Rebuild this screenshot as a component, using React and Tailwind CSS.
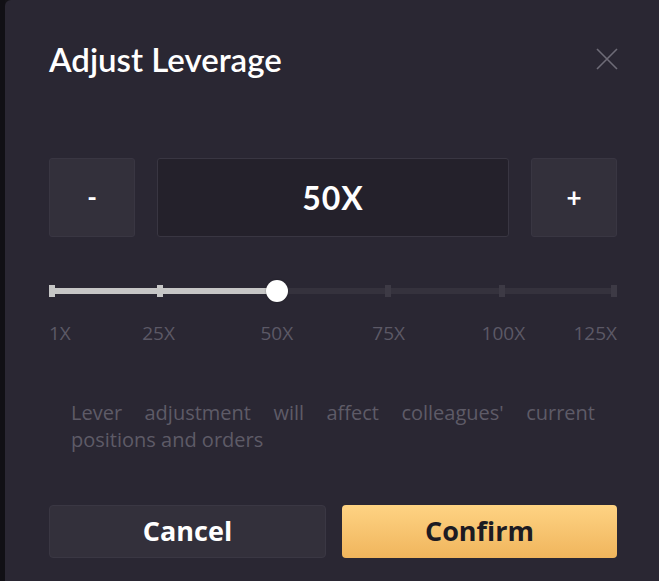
import React, { useState } from "react";

const marks = [
  { label: "1X", pos: 0 },
  { label: "25X", pos: 19.3 },
  { label: "50X", pos: 40.1 },
  { label: "75X", pos: 59.8 },
  { label: "100X", pos: 80 },
  { label: "125X", pos: 100 },
];

const LeverageSlider = ({ index }) => {
  const pct = marks[index].pos;
  return (
    <div className="mt-[42px]">
      <div className="relative h-6">
        <div className="absolute left-0 right-0 top-1/2 h-[6px] -translate-y-1/2 bg-[#35323d]" />
        <div
          className="absolute left-0 top-1/2 h-[6px] -translate-y-1/2 bg-[#c6c6c6]"
          style={{ width: `${pct}%` }}
        />
        {marks.map((m, i) => (
          <div
            key={m.label}
            className={`absolute top-1/2 h-3 w-[6px] -translate-y-1/2 ${i <= index ? "bg-[#c6c6c6]" : "bg-[#3d3a45]"}`}
            style={{ left: `calc(${m.pos}% - ${(m.pos / 100) * 6}px)` }}
          />
        ))}
        <div
          className="absolute top-1/2 h-[22px] w-[22px] -translate-x-1/2 -translate-y-1/2 rounded-full bg-white shadow-[0_0_2px_rgba(0,0,0,0.4)]"
          style={{ left: `${pct}%` }}
        />
      </div>
      <div className="relative mt-[18px] h-6 text-[19px] leading-6 text-[#5c5966]" style={{ fontFamily: "'Open Sans', sans-serif" }}>
        {marks.map((m, i) => {
          let cls = "absolute top-0 -translate-x-1/2";
          if (i === 0) cls = "absolute top-0 left-0";
          if (i === marks.length - 1) cls = "absolute top-0 right-0";
          return (
            <span key={m.label} className={cls} style={i === 0 || i === marks.length - 1 ? {} : { left: `${m.pos}%` }}>
              {m.label}
            </span>
          );
        })}
      </div>
    </div>
  );
};

export default function App() {
  const [index] = useState(2);

  return (
    <div className="flex h-[581px] w-[659px] overflow-hidden bg-[#141318]" style={{ fontFamily: "Lato, 'Noto Sans', sans-serif" }}>
      <div className="w-[5px] shrink-0 bg-[#111015]" />
      <div className="flex-1 rounded-tl-[6px] bg-[#2a2733] pl-[44px] pr-[42px] pt-[40px]">
        {/* Header */}
        <div className="flex items-center justify-between">
          <h1 className="text-[33px] font-semibold leading-[38px] text-white">Adjust Leverage</h1>
          <button className="mr-[-1px] text-[#6e6b77]">
            <svg width="22" height="22" viewBox="0 0 22 22" fill="none" stroke="currentColor" strokeWidth="1.6">
              <path d="M1 1L21 21M21 1L1 21" />
            </svg>
          </button>
        </div>

        {/* Stepper */}
        <div className="mt-[80px] flex h-[79px] gap-[22px]">
          <button className="w-[86px] rounded-[3px] border border-[#393642] bg-[#33303b] text-[26px] font-bold text-white">-</button>
          <div className="flex flex-1 items-center justify-center rounded-[3px] border border-[#393642] bg-[#24212b] text-[32px] font-bold tracking-[1px] text-white">
            50X
          </div>
          <button className="w-[86px] rounded-[3px] border border-[#393642] bg-[#33303b] text-[26px] font-bold text-white">+</button>
        </div>

        <LeverageSlider index={index} />

        {/* Note */}
        <p
          className="mt-[54px] px-[22px] text-justify text-[20px] leading-[27px] text-[#5e5b67]"
          style={{ fontFamily: "'Open Sans', sans-serif" }}
        >
          Lever adjustment will affect colleagues' current positions and orders
        </p>

        {/* Actions */}
        <div className="mt-[52px] flex gap-4">
          <button
            className="h-[53px] flex-1 rounded-[4px] border border-[#3a3743] bg-[#33303b] text-[27px] font-bold text-white"
            style={{ fontFamily: "'Open Sans', sans-serif" }}
          >
            Cancel
          </button>
          <button
            className="h-[53px] flex-1 rounded-[4px] bg-gradient-to-b from-[#fed383] to-[#f0b55c] text-[27px] font-bold text-[#1d1b22]"
            style={{ fontFamily: "'Open Sans', sans-serif" }}
          >
            Confirm
          </button>
        </div>
      </div>
    </div>
  );
}
